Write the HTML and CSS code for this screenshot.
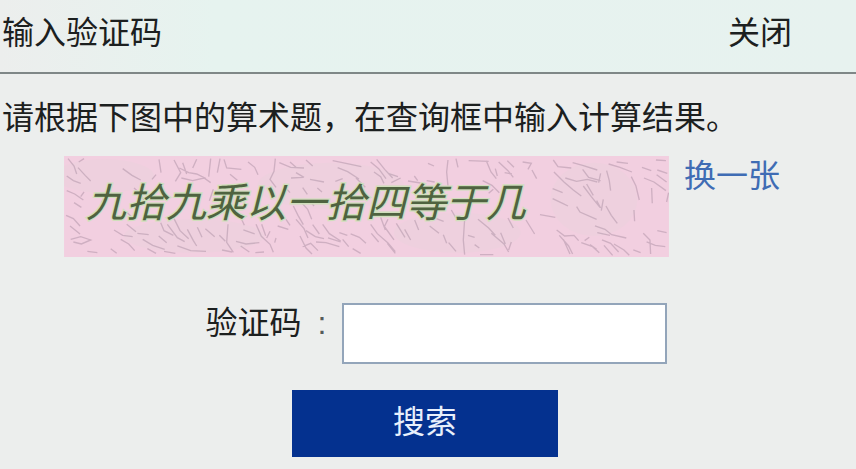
FILE: index.html
```html
<!DOCTYPE html>
<html lang="zh-CN">
<head>
<meta charset="utf-8">
<meta name="viewport" content="width=device-width, initial-scale=1">
<title>输入验证码</title>
<link rel="stylesheet" href="styles.css">
</head>
<body>
<main class="dialog">
  <header class="dialog-header">
    <h1 class="dialog-title">输入验证码</h1>
    <button class="close" type="button">关闭</button>
  </header>
  <form class="dialog-body">
    <p class="hint">请根据下图中的算术题，在查询框中输入计算结果。</p>
    <div class="captcha-row">
      <svg class="captcha" viewBox="0 0 1815 303">
        <rect class="captcha-bg" width="1815" height="303"/>
        <g class="tint">
          <ellipse cx="120" cy="60" rx="150" ry="50"/>
          <ellipse cx="390" cy="240" rx="210" ry="50"/>
          <ellipse cx="800" cy="90" rx="220" ry="70"/>
          <ellipse cx="1180" cy="230" rx="190" ry="60"/>
          <ellipse cx="1590" cy="130" rx="130" ry="110"/>
        </g>
        <g class="noise">
          <path d="M12 8l18 22 8 24M42 35l22 24 16 16M60 8l-16 10M8 60l20 14 22 8M8 104l24 10 26 18M30 140l22 14M6 178l22 10 20 22M18 210l30 24M20 250l30-8 30 10-28 12-24-6M176 38l28 20 26 14M210 96l20 18 12 24M240 108l-20 20M285 10l6 40M330 12l20 38-16 26M346 36l28 14 24 4 28 14M352 66l34 8 34-8 20 14M356 20l12 34M398 10l-12 26M440 8l-6 54M448 100l-12 34M60 108l-10 14M150 222l26 16 30 4M170 250l24 14 18 20M188 205l28 22M220 232l34 4M236 250l30 18 36 12M284 240l24 20M290 200l10 24 28 14M310 205l30 40 22 12M330 188l18 36 26 24M370 220l18 34 10 16M400 214l14 30M424 218l28 24M250 278l26 14M300 286l34 6M340 270l40 14 46 2M140 278l18 14M190 170l16 16M264 70l12-14M70 286l30 4M120 125l-8 16"/>
          <path transform="translate(456 0)" d="M12 8l-8 42M24 10l8 26 44 4M42 55l22 18M96 18l20 16 10 22M178 8l-4 38-12 24 18 24M190 20l34 14 40 2M222 18l18 16M270 12l20 18M225 66l36-2M240 50l24 14M282 70l42 8M350 14l40 8 46 10M365 35l30 12 34 22M358 76l22-8M420 66l28 28M260 95l14 20M232 150l14 28 16 28M255 138l20 22 12 30M280 132l14 18M304 96l14 12M36 205l-4 54 20 30M60 256l30 8 40-4M74 270l26 18M82 222l34 12M120 205l16 36 26 24 10 24M137 205l12 34M152 246l10-20M180 246l-4 14M185 210l32 10M210 190l12 18M240 190l24 28 12 28M252 240l18 36 18 18M270 224l28 18 26 6M290 206l20 28M300 258l30 2 40 12M260 272l24-10 22 22M320 205l20 28 34 22M336 246l38 12M370 230l24 8M380 250l18 22M404 234l26 10 20 18M410 278l24 14M10 238l18 18M18 282l30 6M118 290l26-2M75 186l10 22M222 110l-14-16"/>
          <path transform="translate(912 0)" d="M8 18l24 20 22 30M18 48l20 14 10 20M26 10l24 30 24 26M70 80l28-14M60 52l30 10M120 75l38 6M139 60l10 14M176 74l24 4M180 22l18 8M240 12l-4 36 4 42M264 8l6 26M302 14l60 2M355 14l14 34 16 20M382 38l6 22M392 18l28 26 16 20M418 14l20 20M344 74l28 14 22 22M376 100l-14 12M410 50l22 4M38 184l14 38M8 205l20 28 32 28 22 26M10 232l22 26M48 210l30 42M58 262l24 30M85 202l26 42M110 220l18 32M140 192l12 30M185 210l28 22M226 236l10 26M242 260l22 26M290 190l-4 62 4 44M300 238l20 6M320 266l14 10M330 190l32 26 20 22M370 232l38 32 14 24M398 230l14 34M420 186l16 30M430 258l-8 24M60 190l-10 20M205 188l22 8M250 162l14 24M336 296l40 0"/>
          <path transform="translate(1368 0)" d="M8 18l26 4-10 18M36 42l14 26M100 12l14 20 40 4M102 48l30 30 28 24 24 18M136 66l34 10 32-6 30 8M158 20l30 8 44 14M188 40l18 24 36 10M190 90l24 32 26 32M200 84l20 34M242 52l-6 28M260 44l8 30 4 30M266 24l34 10 36 14M290 18l34 4M334 62l14 28 10 42M366 34l28 10M372 66l30 12 36 26M408 12l30 2M410 56l30 22M395 96l2 46M412 42l30 10M98 98l30 12M98 128l30 14 16 8M170 152l10 16 50 22M230 134l12 22M250 130l-6 34M258 150l16 28 18 24M342 162l2 34M60 176l46 8M18 192l26 42M110 222l24 18 28-2 14 16M118 238l28 32 12 24M130 250l20 44M184 260l34 12 20 18M225 210l30 10 20 16 44 10M232 230l38 8M246 252l26 10 24 26M252 268l26 30M282 264l30 18 16 16M370 232l20 20 2 42M380 258l26 10 30 4M412 224l28 6M208 244l-14 10M230 280l-20-14M340 282l22 8M446 110l-6 28"/>
        </g>
        <text class="question" x="66" y="182">九拾九乘以一拾四等于几</text>
      </svg>
      <a class="refresh" href="#">换一张</a>
    </div>
    <div class="field">
      <label class="field-label" for="code">验证码<span class="colon">:</span></label>
      <input class="field-input" id="code" type="text" autocomplete="off">
    </div>
    <button class="submit" type="submit">搜索</button>
  </form>
</main>
</body>
</html>
```
FILE: styles.css
```css
* {
  box-sizing: border-box;
}

body {
  margin: 0;
  background: #eceeed;
  color: #1c2020;
  font-family: "Liberation Sans", "Noto Sans CJK SC", sans-serif;
  font-size: 32px;
  font-weight: 400;
  line-height: 40px;
}

button,
input {
  font: inherit;
  color: inherit;
}

.dialog-header {
  display: flex;
  justify-content: space-between;
  align-items: center;
  padding: 13px 64px 19px 2px;
  border-bottom: 2px solid #7f8787;
  background: linear-gradient(90deg, #eceeed, #e6f3ef 25%, #e7f2ef);
}

.dialog-title {
  margin: 0;
  font-size: 32px;
  font-weight: 400;
}

.close {
  padding: 0;
  border: 0;
  background: none;
  cursor: pointer;
}

.dialog-body {
  display: flex;
  flex-direction: column;
  padding: 24px 8px 12px 2px;
}

.hint {
  margin: 0 0 18px;
}

.captcha-row {
  display: flex;
  align-items: flex-start;
  gap: 15px;
  padding: 0 68px 0 62px;
}

.captcha {
  display: block;
  flex: 1;
  min-width: 0;
}

.captcha-bg {
  fill: #f2cfe0;
}

.tint {
  fill: #ead3dc;
  opacity: 0.4;
}

.noise {
  fill: none;
  stroke: #a58a9e;
  stroke-width: 4;
  opacity: 0.45;
}

.question {
  fill: #4f6340;
  stroke: #d0dfbc;
  stroke-width: 8px;
  paint-order: stroke;
  font-size: 120px;
  font-style: italic;
}

.refresh {
  flex: none;
  color: #3f6cb4;
  text-decoration: none;
}

.field {
  display: flex;
  align-items: flex-start;
  justify-content: center;
  margin: 46px 0 26px;
  padding-left: 22px;
}

.field-label {
  width: 136px;
}

.colon {
  margin-left: 16px;
  color: #555b5b;
}

.field-input {
  width: 325px;
  height: 61px;
  padding: 0 12px;
  border: 2px solid #93a5ba;
  border-radius: 0;
  background: #fff;
  outline: none;
}

.submit {
  align-self: center;
  width: 266px;
  padding: 12px 0 15px;
  border: 0;
  background: #04318f;
  color: #e8f0fc;
  cursor: pointer;
}
```
